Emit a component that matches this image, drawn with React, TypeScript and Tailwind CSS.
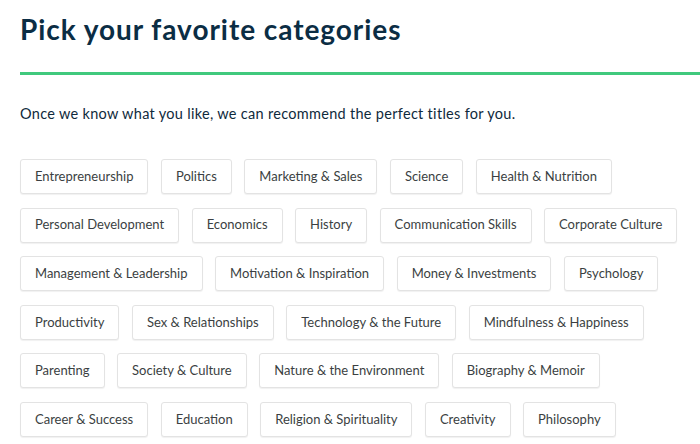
import React from 'react';

const rows: string[][] = [
  ['Entrepreneurship', 'Politics', 'Marketing & Sales', 'Science', 'Health & Nutrition'],
  ['Personal Development', 'Economics', 'History', 'Communication Skills', 'Corporate Culture'],
  ['Management & Leadership', 'Motivation & Inspiration', 'Money & Investments', 'Psychology'],
  ['Productivity', 'Sex & Relationships', 'Technology & the Future', 'Mindfulness & Happiness'],
  ['Parenting', 'Society & Culture', 'Nature & the Environment', 'Biography & Memoir'],
  ['Career & Success', 'Education', 'Religion & Spirituality', 'Creativity', 'Philosophy'],
];

const Chip = ({ label }: { label: string }) => (
  <button className="h-[35px] px-[14px] border border-[#e3e3e3] rounded-[3px] bg-white shadow-[0_1px_1px_rgba(0,0,0,0.06)] text-[13px] text-[#3b3f42] whitespace-nowrap">
    {label}
  </button>
);

const App = () => {
  return (
    <div className="min-h-screen bg-white overflow-hidden" style={{ fontFamily: 'Lato, "Noto Sans", sans-serif' }}>
      <div className="pl-5">
        <h1 className="pt-[11px] text-[28px] leading-[36px] font-bold text-[#0b2d44] tracking-[0.95px]">
          Pick your favorite categories
        </h1>
        <div className="mt-[25px] h-[3px] bg-[#40c97d]" />
        <p className="mt-[29px] text-[14.5px] leading-5 text-[#0f2a3c] tracking-[0.3px]">
          Once we know what you like, we can recommend the perfect titles for you.
        </p>
        <div className="mt-[35px] flex flex-col gap-[13.6px]">
          {rows.map((row, i) => (
            <div key={i} className="flex gap-[12.5px]">
              {row.map((c) => (
                <Chip key={c} label={c} />
              ))}
            </div>
          ))}
        </div>
      </div>
    </div>
  );
};

export default App;
